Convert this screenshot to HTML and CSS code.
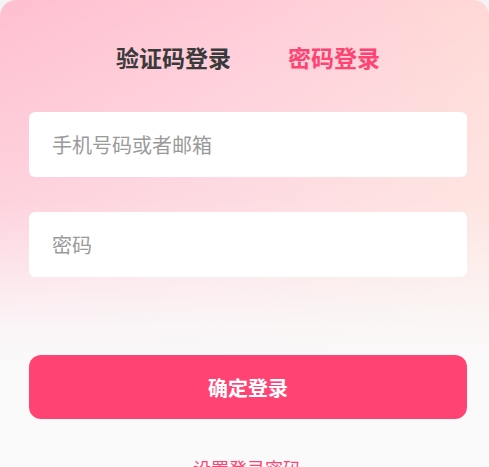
FILE: index.html
```html
<!DOCTYPE html>
<html lang="zh-CN">
<head>
<meta charset="utf-8">
<title>登录</title>
<link rel="stylesheet" href="styles.css">
</head>
<body>
<div class="page">
  <div class="tabs">
    <span class="tab">验证码登录</span>
    <span class="tab tab-active">密码登录</span>
  </div>
  <form class="form">
    <input class="field" type="text" placeholder="手机号码或者邮箱">
    <input class="field" type="password" placeholder="密码">
    <button class="submit" type="button">确定登录</button>
  </form>
  <div class="link">设置登录密码</div>
</div>
</body>
</html>
```

FILE: styles.css
```css
html, body {
  margin: 0;
  padding: 0;
  background: #f4f4f4;
}
body {
  font-family: "Noto Sans CJK SC", "Noto Sans", sans-serif;
  width: 489px;
  height: 467px;
  overflow: hidden;
}
.page {
  box-sizing: border-box;
  width: 489px;
  min-height: 467px;
  border-radius: 16px 16px 0 0;
  overflow: hidden;
  background:
    linear-gradient(to bottom, rgba(250,250,250,0) 0%, rgba(250,250,250,0.3) 42%, rgba(250,250,250,0.9) 68%, #fafafa 78%),
    linear-gradient(105deg, #ffbfd0 0%, #ffcdd8 45%, #ffe0d6 100%);
  padding-top: 41px;
}
.tabs {
  display: flex;
  justify-content: center;
  gap: 57px;
  padding-left: 7px;
  height: 32px;
}
.tab {
  font-size: 23px;
  line-height: 32px;
  font-weight: 700;
  color: #3a3a3a;
}
.tab-active {
  color: #ff4373;
}
.form {
  display: flex;
  flex-direction: column;
  margin: 39px 22px 0 29px;
}
.field {
  box-sizing: border-box;
  height: 65px;
  border: none;
  border-radius: 6px;
  background: #fff;
  padding: 0 23px;
  font-family: inherit;
  font-size: 20px;
  color: #333;
  outline: none;
  margin-bottom: 35px;
}
.field::placeholder {
  color: #9a9a9a;
}
.submit {
  height: 64px;
  margin-top: 43px;
  border: none;
  border-radius: 12px;
  background: #ff4373;
  color: #fff;
  font-family: inherit;
  font-size: 20px;
  font-weight: 700;
}
.link {
  margin-top: 36px;
  text-align: center;
  font-size: 18px;
  line-height: 26px;
  color: #ff4373;
  padding-left: 5px;
}
```
